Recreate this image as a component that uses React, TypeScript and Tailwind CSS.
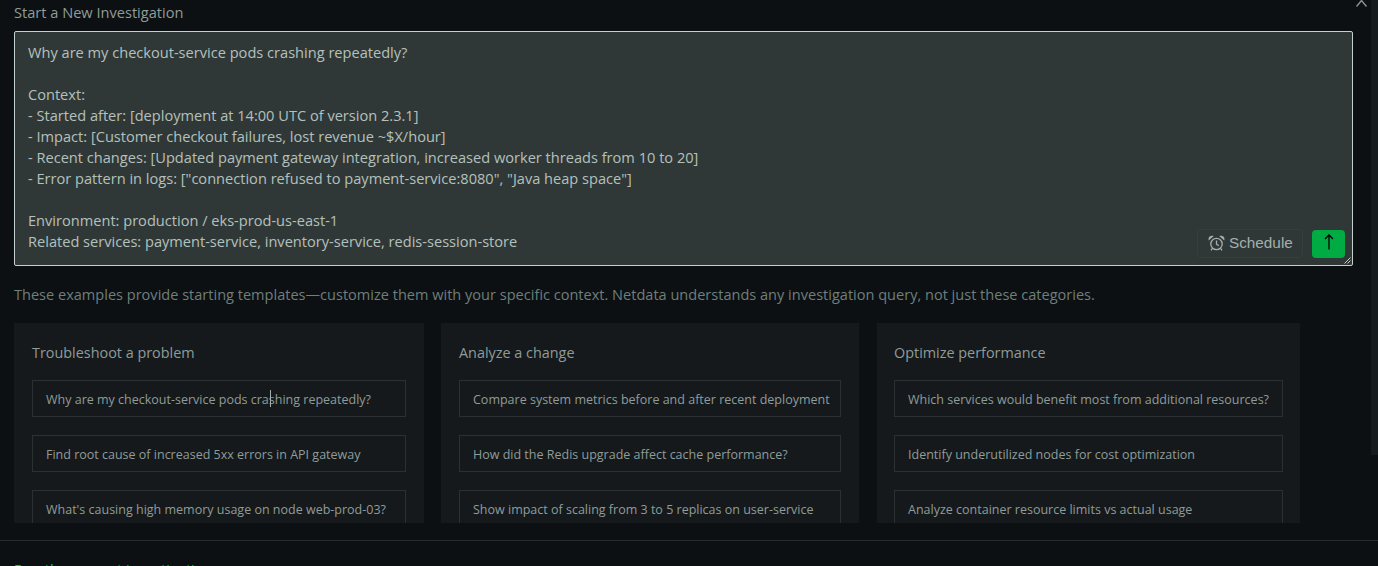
const columns = [
  {
    title: 'Troubleshoot a problem',
    box: 'w-[410px] px-[18px]',
    items: [
      'Why are my checkout-service pods crashing repeatedly?',
      'Find root cause of increased 5xx errors in API gateway',
      "What's causing high memory usage on node web-prod-03?",
    ],
  },
  {
    title: 'Analyze a change',
    box: 'w-[418px] px-[18px]',
    items: [
      'Compare system metrics before and after recent deployment',
      'How did the Redis upgrade affect cache performance?',
      'Show impact of scaling from 3 to 5 replicas on user-service',
    ],
  },
  {
    title: 'Optimize performance',
    box: 'w-[423px] ml-px px-[17px]',
    items: [
      'Which services would benefit most from additional resources?',
      'Identify underutilized nodes for cost optimization',
      'Analyze container resource limits vs actual usage',
    ],
  },
];

const prompt = `Why are my checkout-service pods crashing repeatedly?

Context:
- Started after: [deployment at 14:00 UTC of version 2.3.1]
- Impact: [Customer checkout failures, lost revenue ~$X/hour]
- Recent changes: [Updated payment gateway integration, increased worker threads from 10 to 20]
- Error pattern in logs: ["connection refused to payment-service:8080", "Java heap space"]

Environment: production / eks-prod-us-east-1
Related services: payment-service, inventory-service, redis-session-store`;

function AlarmIcon() {
  return (
    <svg className="h-[17px] w-[17px]" viewBox="0 0 17 17" fill="none" stroke="currentColor" strokeWidth="1.3">
      <circle cx="8.5" cy="9" r="5.7" />
      <path d="M8.5 5.6V9.2L10.8 10.6" />
      <path d="M1.2 4.2C1 2.4 2.6 1 4.4 1.4L1.2 4.2Z" />
      <path d="M15.8 4.2C16 2.4 14.4 1 12.6 1.4L15.8 4.2Z" />
      <path d="M4.4 13.4L3 15.4M12.6 13.4L14 15.4" />
    </svg>
  );
}

export default function App() {
  return (
    <div className="relative h-[566px] w-[1378px] overflow-hidden bg-[#0c1012] font-['Open_Sans',sans-serif] text-[#a3b0ad]">
      {/* Scrollbar */}
      <div className="absolute right-0 top-0 h-[455px] w-[7px] bg-[#161b1d]" />
      <svg className="absolute right-[11px] top-0 h-[7px] w-[11px]" viewBox="0 0 11 7" fill="none" stroke="#8a9593" strokeWidth="1.4">
        <path d="M0.5 6.5 5.5 0.5 10.5 6.5" />
      </svg>

      <div className="pl-[14px]">
        <h2 className="h-[31px] pt-[2px] text-[14.6px] leading-[20px] text-[#8f9c9a]">Start a New Investigation</h2>

        {/* Prompt box */}
        <div className="relative h-[235px] w-[1339px] rounded-[2px] border border-[#c5d0cd] bg-[#303837]">
          <pre className="whitespace-pre-wrap px-[13px] pt-[10px] font-['Open_Sans',sans-serif] text-[14.6px] leading-[21px] text-[#b4c0bd]">
            {prompt}
          </pre>
          <div className="absolute bottom-[7px] right-[7px] flex items-center gap-[9px]">
            <div className="flex h-[29px] w-[106px] items-center gap-[4px] rounded-[4px] border border-[#363f3e] pl-[10px] font-['Liberation_Sans',sans-serif] text-[15.3px] text-[#a3b0ad]">
              <AlarmIcon />
              Schedule
            </div>
            <div className="flex h-[28px] w-[33px] items-start justify-center rounded-[4px] bg-[#00ab44] pt-[4px]">
              <svg className="h-[16px] w-[10px]" viewBox="0 0 10 16" fill="none" stroke="#000" strokeWidth="1.3">
                <path d="M5 15.5V1M1 5 5 1 9 5" />
              </svg>
            </div>
          </div>
          <svg className="absolute bottom-[1px] right-[1px] h-[7px] w-[7px]" viewBox="0 0 7 7">
            <path d="M0.5 6.5 6.5 0.5M3.5 6.5 6.5 3.5" stroke="#c5d0cd" strokeWidth="1" />
          </svg>
        </div>

        <p className="mt-[18px] h-[20px] text-[14.56px] leading-[20px] text-[#6f7f7c]">
          These examples provide starting templates—customize them with your specific context. Netdata understands any investigation query, not just these categories.
        </p>

        {/* Example cards */}
        <div className="mt-[19px] flex h-[200px] gap-[17px] overflow-hidden">
          {columns.map((col) => (
            <div key={col.title} className={`${col.box} shrink-0 bg-[#15191b] pt-[20px]`}>
              <h3 className="text-[14.4px] leading-[20px] text-[#8f9c9a]">{col.title}</h3>
              <div className="mt-[17px] flex flex-col gap-[18px]">
                {col.items.map((item, i) => (
                  <div
                    key={item}
                    className="relative h-[37px] shrink-0 whitespace-nowrap border border-[#2a3130] pl-[13px] pt-[10px] text-[12.5px] leading-[18px] text-[#8f9c9a]"
                  >
                    {item}
                    {col.title === 'Troubleshoot a problem' && i === 0 && (
                      <span className="absolute left-[237px] top-[9px] h-[17px] w-px bg-[#a3b0ad]" />
                    )}
                  </div>
                ))}
              </div>
            </div>
          ))}
        </div>
      </div>

      <div className="mt-[17px] h-px w-full bg-[#262c2d]" />
      <p className="pl-[14px] pt-[18px] text-[14.6px] leading-[20px] text-[#00c74f]">Run these exact investigations</p>
    </div>
  );
}
